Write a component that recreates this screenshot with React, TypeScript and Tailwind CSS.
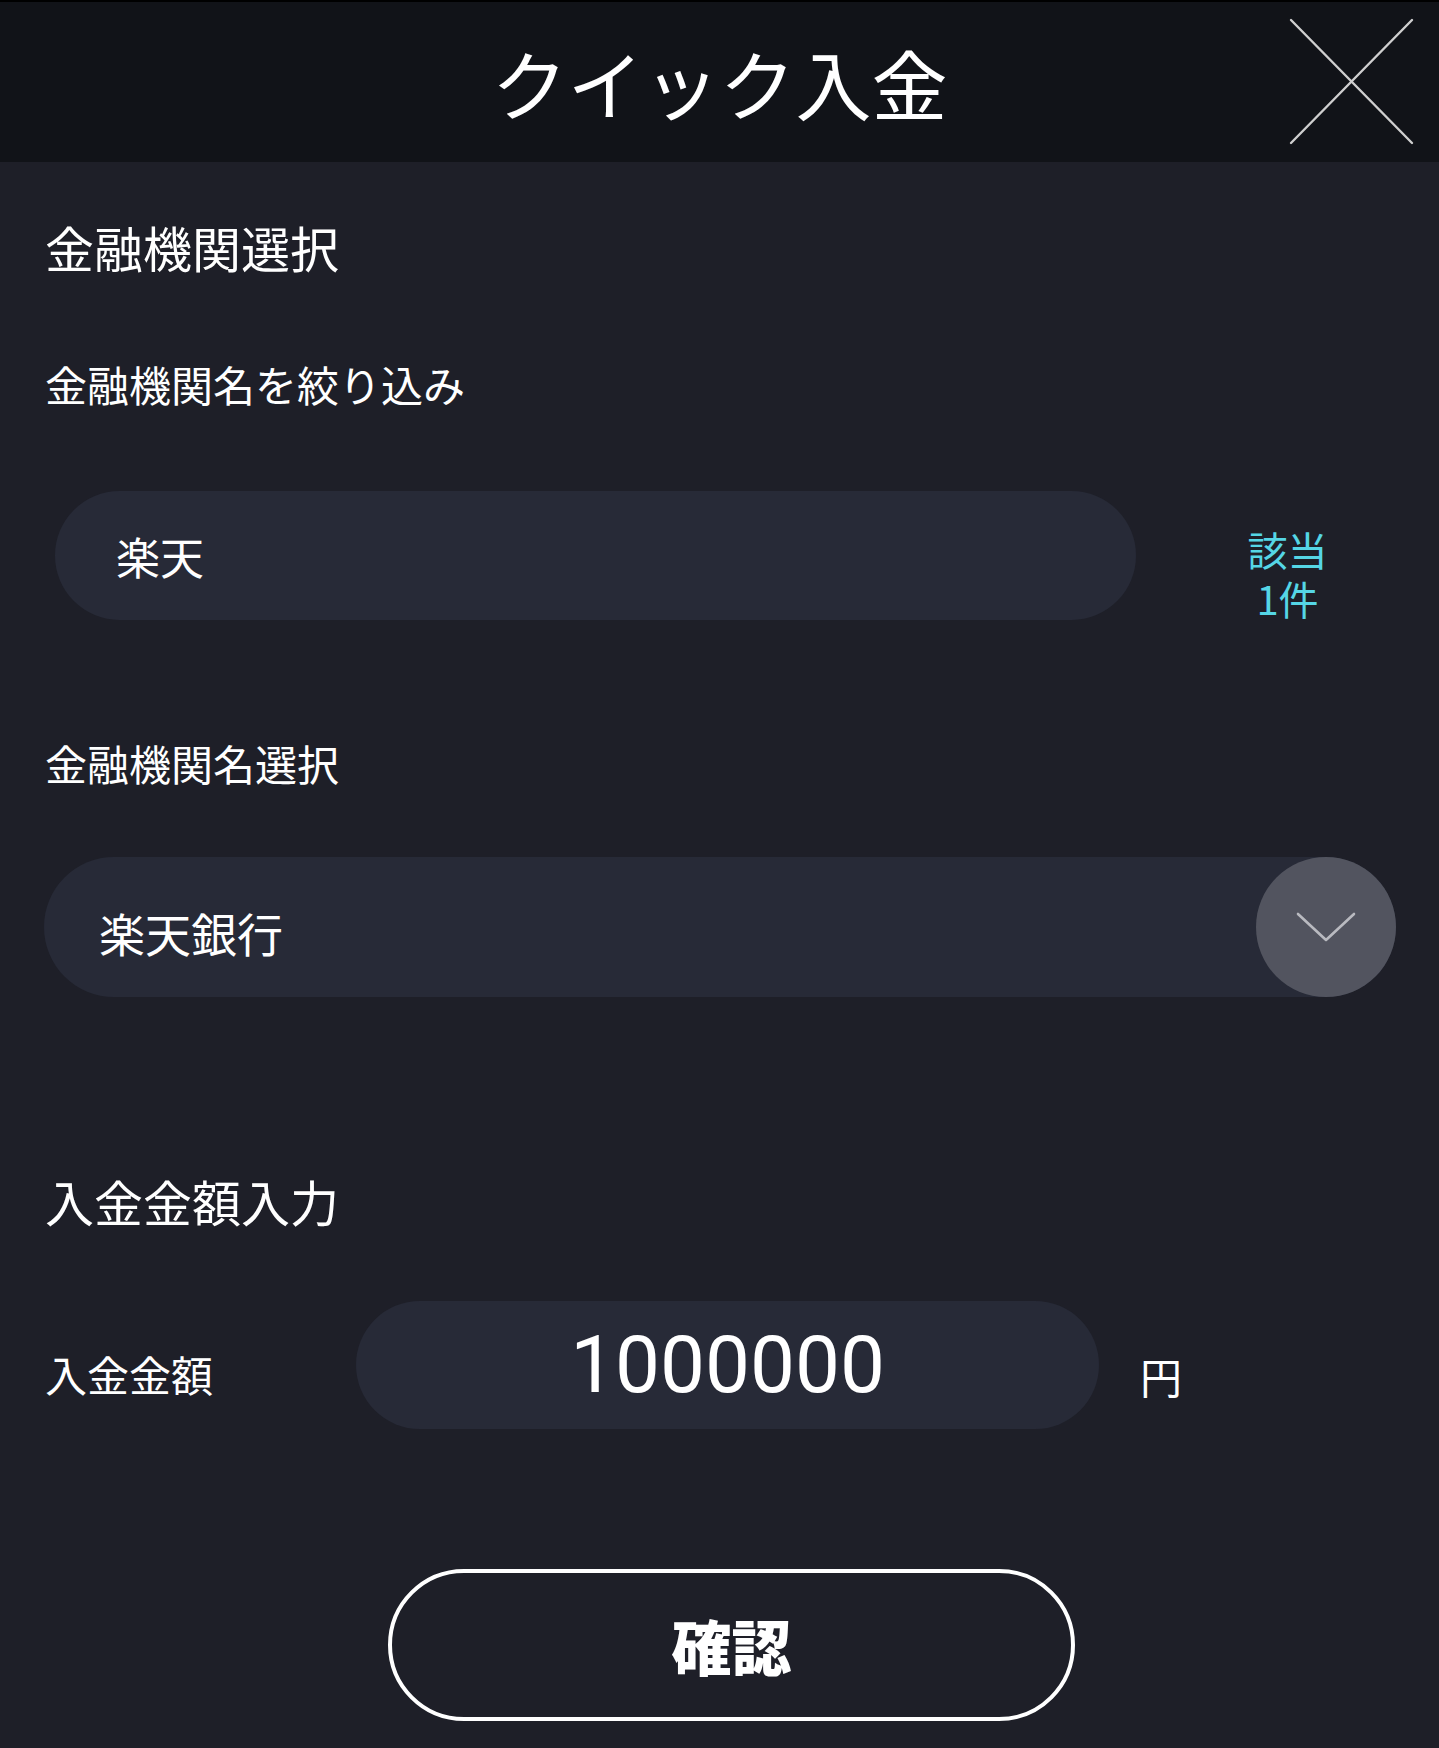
import React from "react";

const jp = { fontFamily: '"Noto Sans CJK JP", "Noto Sans", sans-serif' };
const num = { fontFamily: 'Roboto, "Noto Sans CJK JP", sans-serif' };

function CloseIcon() {
  return (
    <svg width="126" height="128" viewBox="0 0 126 128" fill="none">
      <path
        d="M2 2 L123 125 M123 2 L2 125"
        stroke="#cfcfcf"
        strokeWidth="2.4"
        strokeLinecap="round"
      />
    </svg>
  );
}

function Chevron() {
  return (
    <svg width="62" height="32" viewBox="0 0 62 32" fill="none">
      <path
        d="M3 3 L31 29 L59 3"
        stroke="#b9bac0"
        strokeWidth="2.6"
        strokeLinecap="round"
        strokeLinejoin="round"
      />
    </svg>
  );
}

export default function App() {
  return (
    <div className="min-h-[1748px] w-full bg-[#1e1f28] text-white" style={jp}>
      {/* header */}
      <header className="grid h-[162px] grid-cols-[1fr_auto_1fr] items-center border-t-2 border-black bg-[#111318]">
        <div />
        <h1 className="text-[76px] font-normal leading-none tracking-normal">クイック入金</h1>
        <div className="flex justify-end pr-[24px]">
          <CloseIcon />
        </div>
      </header>

      {/* bank selection */}
      <section className="pt-[60px]">
        <h2 className="pl-[45px] text-[49px] leading-none">金融機関選択</h2>

        <p className="mt-[92px] pl-[45px] text-[42px] leading-none">金融機関名を絞り込み</p>

        <div className="mt-[86px] flex items-start pl-[55px]">
          <div className="flex h-[129px] w-[1081px] items-center rounded-full bg-[#272a37] pl-[61px]">
            <span className="text-[44px] leading-none">楽天</span>
          </div>
          <div className="mt-[38px] flex flex-1 flex-col items-center gap-[9px] text-[40px] leading-none text-[#55d6e6]">
            <span>該当</span>
            <span>1件</span>
          </div>
        </div>

        <p className="mt-[122px] pl-[45px] text-[42px] leading-none">金融機関名選択</p>

        <div className="mt-[73px] pl-[44px]">
          <div className="flex h-[140px] w-[1352px] items-center justify-between rounded-full bg-[#272a37]">
            <span className="pl-[55px] pt-[10px] text-[46px] leading-none">楽天銀行</span>
            <div className="flex h-[140px] w-[140px] items-center justify-center rounded-full bg-[#52545f]">
              <Chevron />
            </div>
          </div>
        </div>
      </section>

      {/* amount */}
      <section className="pt-[179px]">
        <h2 className="pl-[45px] text-[49px] leading-none">入金金額入力</h2>

        <div className="mt-[76px] flex items-start pl-[45px]">
          <span className="mt-[52px] w-[311px] text-[42px] leading-none">入金金額</span>
          <div className="flex h-[128px] w-[743px] items-center justify-center rounded-full bg-[#272a37]">
            <span className="text-[80px] leading-none" style={num}>
              1000000
            </span>
          </div>
          <span className="ml-[41px] mt-[54px] text-[42px] leading-none">円</span>
        </div>

        <div className="mt-[140px] pl-[388px]">
          <button className="flex h-[152px] w-[687px] items-center justify-center rounded-full border-4 border-white bg-transparent">
            <span className="text-[60px] font-black leading-none text-white">確認</span>
          </button>
        </div>
      </section>
    </div>
  );
}
